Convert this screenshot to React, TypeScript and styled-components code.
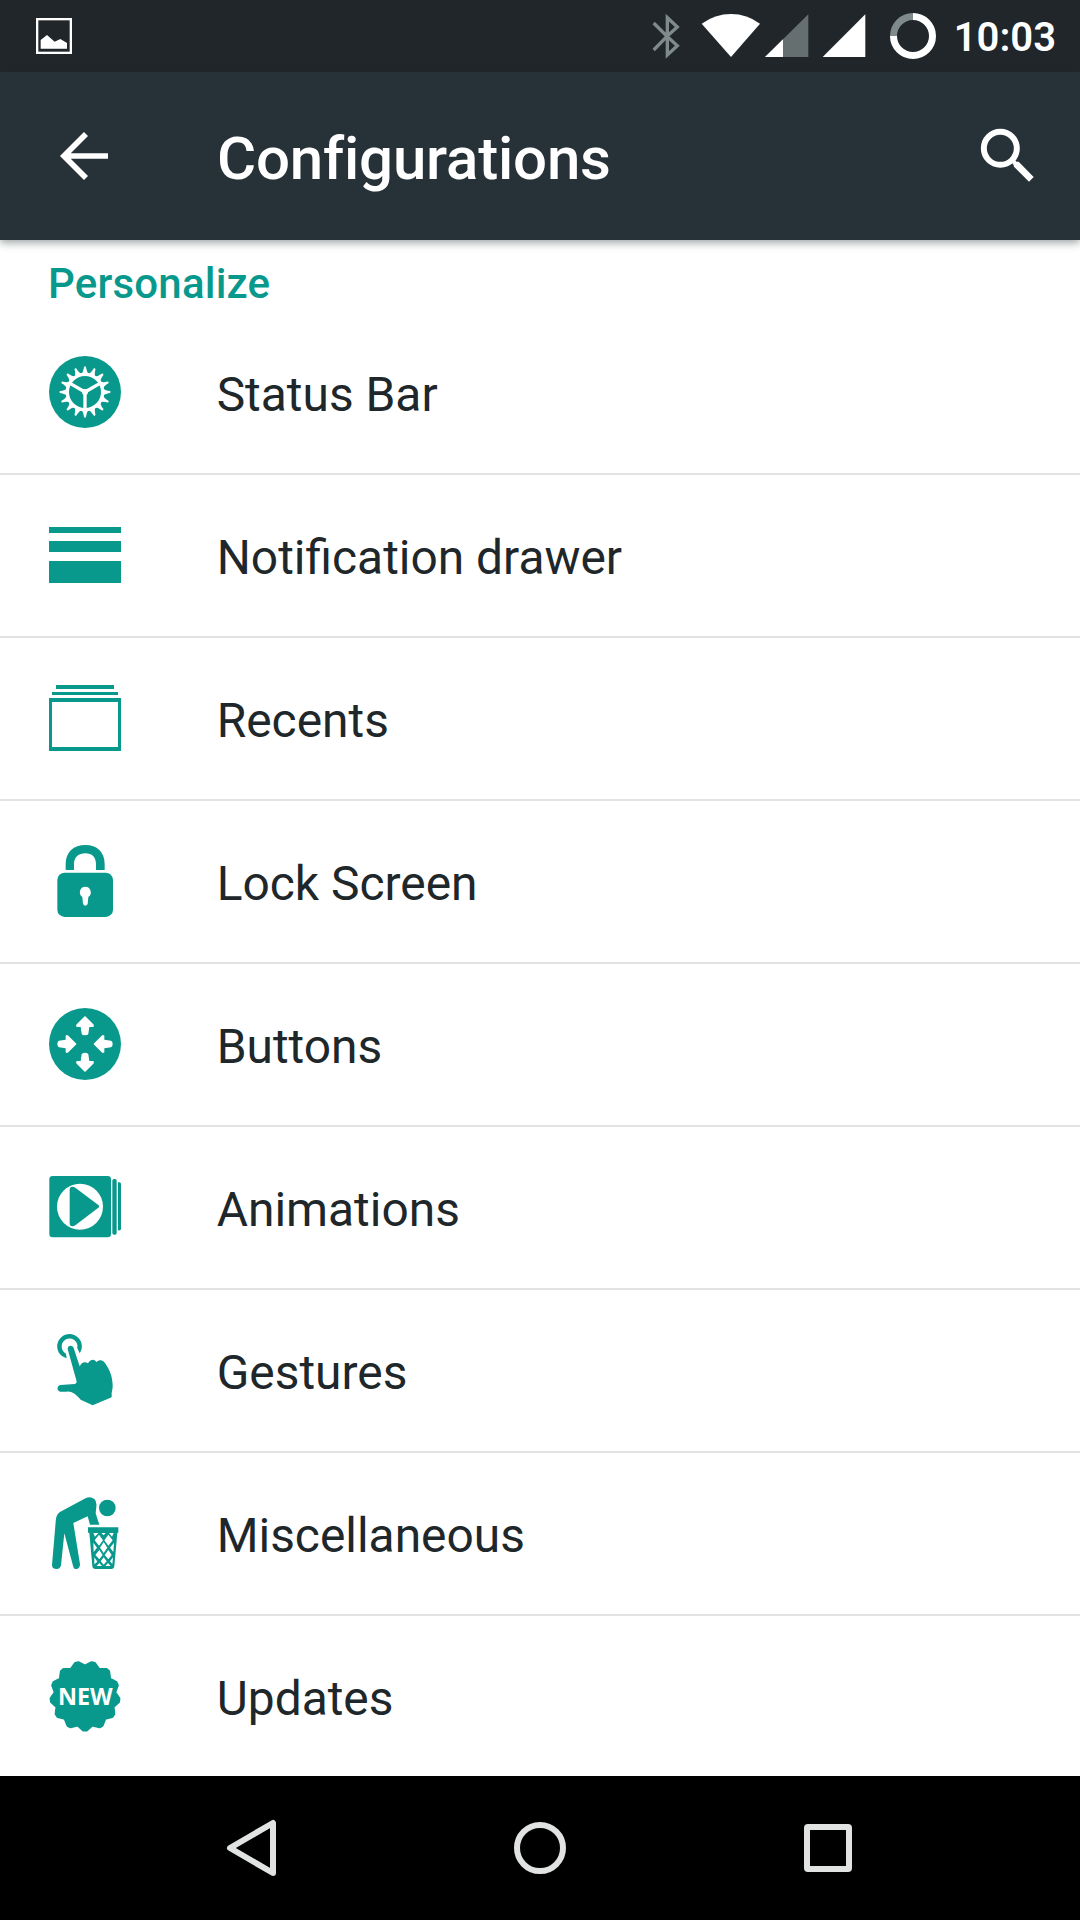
import React from 'react';
import styled, { createGlobalStyle } from 'styled-components';

const TEAL = '#09998c';

const GlobalStyle = createGlobalStyle`
  body {
    margin: 0;
    background: #fff;
    font-family: Roboto, 'Noto Sans', sans-serif;
  }
`;

const Screen = styled.div`
  display: flex;
  flex-direction: column;
  width: 1080px;
  height: 1920px;
  overflow: hidden;
  background: #fff;
`;

const StatusBar = styled.header`
  display: flex;
  flex: none;
  align-items: center;
  height: 72px;
  padding: 0 24px 0 36px;
  box-sizing: border-box;
  background: #20262a;
`;

const StatusIcon = styled.svg<{ $width: number; $gap: number }>`
  display: block;
  flex: none;
  width: ${(p) => p.$width}px;
  height: 72px;
  margin-left: ${(p) => p.$gap}px;
`;

const StatusTray = styled.div`
  display: flex;
  align-items: center;
  width: 404px;
  margin-left: auto;
`;

const Clock = styled.time`
  margin-left: auto;
  color: #fff;
  font-size: 40px;
  font-weight: 600;
  line-height: 72px;
  padding-top: 3px;
`;

const AppBar = styled.div`
  display: flex;
  flex: none;
  align-items: center;
  height: 168px;
  padding: 0 36px 0 48px;
  box-sizing: border-box;
  background: #273238;
  box-shadow: 0 3px 8px rgba(30, 45, 45, 0.42);
  z-index: 1;
`;

const IconButton = styled.button`
  display: flex;
  width: 72px;
  height: 72px;
  padding: 0;
  border: 0;
  background: none;
`;

const Title = styled.h1`
  flex: 1;
  margin: 0 0 0 97px;
  padding-top: 6px;
  color: #fff;
  font-size: 60px;
  font-weight: 500;
  letter-spacing: -0.2px;
  font-variant-ligatures: common-ligatures;
  line-height: 72px;
`;

const Content = styled.main`
  display: flex;
  flex: 1;
  flex-direction: column;
  min-height: 0;
  overflow: hidden;
`;

const SectionTitle = styled.h2`
  flex: none;
  height: 72px;
  margin: 0;
  padding: 16px 48px 0;
  box-sizing: border-box;
  color: ${TEAL};
  font-size: 42px;
  font-weight: 500;
  letter-spacing: 0.2px;
  line-height: 56px;
`;

const List = styled.ul`
  margin: 0;
  padding: 0;
  list-style: none;
`;

const Row = styled.li`
  display: flex;
  align-items: flex-start;
  height: 163px;
  padding: 44px 48px 0 49px;
  box-sizing: border-box;
  border-bottom: 2px solid #e1e2e2;
`;

const RowIcon = styled.svg`
  display: block;
  flex: none;
  width: 72px;
  height: 72px;
  overflow: visible;
  fill: ${TEAL};
`;

const RowLabel = styled.span`
  margin-left: 95.7px;
  padding-top: 3px;
  color: #20272a;
  font-size: 47.9px;
  line-height: 72px;
`;

const NavBar = styled.nav`
  display: grid;
  flex: none;
  grid-template-columns: repeat(3, 288px);
  justify-content: center;
  height: 144px;
  background: #000;
`;

const NavButton = styled.button`
  display: flex;
  align-items: center;
  justify-content: center;
  padding: 0;
  border: 0;
  background: none;
`;

const NavGlyph = styled.svg`
  width: 84px;
  height: 84px;
  fill: none;
  stroke: #e1e3e3;
  stroke-width: 6;
  stroke-linejoin: round;
`;

const angles = (count: number) => Array.from({ length: count }, (_, i) => (360 / count) * i);

const badgePoint = (step: number, radius: number) => {
  const a = Math.PI / 2 + (step * Math.PI) / 13;
  return `${(165 + radius * Math.cos(a)).toFixed(1)},${(153 + radius * Math.sin(a)).toFixed(1)}`;
};

const badgePoints = Array.from({ length: 13 }, (_, i) =>
  [badgePoint(i * 2 - 0.2, 103), badgePoint(i * 2 + 0.2, 103), badgePoint(i * 2 + 1, 91)].join(' '),
).join(' ');

const GearIcon = () => (
  <RowIcon viewBox="57 48 216 216">
    <circle cx="165" cy="156" r="108" />
    <g fill="#fff">
      {angles(16).map((a) => (
        <path key={a} transform={`rotate(${a} 165 156)`} d="M152 104Q160 97 162 81Q165 77 168 81Q170 97 178 104Z" />
      ))}
    </g>
    <g fill="none" stroke="#fff" strokeWidth="10">
      <circle cx="165" cy="156" r="53" />
      <path d="M165 208V156L120 130M165 156L210 130" />
    </g>
    <circle cx="165" cy="156" r="9" fill="#fff" />
  </RowIcon>
);

const DrawerIcon = () => (
  <RowIcon viewBox="57 27 216 216" shapeRendering="crispEdges">
    <path d="M57 51h216v18H57zM57 93h216v33H57zM57 152h216v66H57z" />
  </RowIcon>
);

const RecentsIcon = () => (
  <RowIcon viewBox="57 516 216 216" shapeRendering="crispEdges">
    <path d="M78 525h174v12H78zM66 546h198v9H66z" />
    <path fillRule="evenodd" d="M57 564h216v159H57zM66 576v135h198V576z" />
  </RowIcon>
);

const LockIcon = () => (
  <RowIcon viewBox="57 45 216 216">
    <path d="M107 120V102C107 66 131 45 166 45S224 66 224 102V120H198V102C198 82 186 70 166 70S132 82 132 102V120Z" />
    <rect x="82" y="128" width="167" height="133" rx="22" />
    <path fill="#fff" d="M166 170a17 17 0 0 1 9 31l-2 21q-7 11-14 0l-2-21a17 17 0 0 1 9-31Z" />
  </RowIcon>
);

const ARROW =
  'M165 79Q167 79 169 82L190 103Q194 108 190 111H178L175 131Q174 136 165 136T155 131L152 111H140Q136 108 140 103L161 82Q163 79 165 79Z';

const ButtonsIcon = () => (
  <RowIcon viewBox="57 54 216 216">
    <circle cx="165" cy="162" r="108" />
    <g fill="#fff">
      <path d={ARROW} />
      <path transform="rotate(180 165 162)" d={ARROW} />
      <path transform="translate(110 162) rotate(90) translate(-165 -108)" d={ARROW} />
      <path transform="translate(220 162) rotate(-90) translate(-165 -108)" d={ARROW} />
    </g>
  </RowIcon>
);

const AnimationsIcon = () => (
  <RowIcon viewBox="57 33 216 216">
    <rect x="58" y="48" width="185" height="184" rx="10" />
    <circle cx="150" cy="140" r="69" fill="#fff" />
    <path d="M119 89Q119 80 127 80Q132 80 137 84L204 134Q211 139 204 144L137 195Q132 199 127 199Q119 199 119 190Z" />
    <rect x="247" y="57" width="13" height="167" rx="5" />
    <path d="M264 67Q273 65 273 72V206Q273 213 264 211Z" />
  </RowIcon>
);

const GesturesIcon = () => (
  <RowIcon viewBox="57 42 216 216">
    <path d="M108 101A24 24 0 1 1 142 85L149 100A37 37 0 1 0 110 115Z" />
    <path d="M113 87C112 77 127 73 131 84L149 139C154 128 164 123 174 130C181 117 193 116 199 126C211 116 221 122 227 132C240 151 249 175 248 201Q247 211 245 218V232L188 256L152 239C137 222 124 213 110 215H91C80 214 80 197 91 195L134 192Q142 191 139 181Z" />
  </RowIcon>
);

const MiscellaneousIcon = () => (
  <RowIcon viewBox="57 51 216 216">
    <circle cx="232" cy="84" r="25" />
    <path d="M168 54Q181 48 193 57Q201 64 199 80L197 100L208 134H180L173 109L130 129L135 160L150 253Q150 267 138 267Q131 267 129 257L103 160L93 256Q91 267 80 267Q66 267 66 255L77 126C78 109 82 100 94 94Z" />
    <path d="M174 142H265V158H262L253 259Q252 267 244 267H196Q188 267 187 259L178 158H174Z" />
    <g fill="#fff">
      <path d="M190 159H205L195 170ZM214 159H227L221 166ZM237 159H251L246 170Z" />
      <path d="M207 164L219 181L207 197L194 181ZM235 164L248 181L235 197L223 181ZM190 188L201 203L191 216ZM221 186L232 203L221 219L210 203ZM252 188L250 216L240 203ZM208 210L218 225L208 238L196 225ZM235 210L245 225L235 238L224 225ZM193 232L202 245L193 253ZM221 232L230 244L221 254L212 244ZM249 232L247 252L240 244ZM208 249L216 258H200ZM234 249L242 258H226Z" />
    </g>
  </RowIcon>
);

const UpdatesIcon = () => (
  <RowIcon viewBox="57 45 216 216">
    <polygon points={badgePoints} stroke={TEAL} strokeWidth="7" strokeLinejoin="round" />
    <text
      x="84"
      y="179"
      fill="#fff"
      fontFamily="'Open Sans', 'Noto Sans', sans-serif"
      fontSize="72"
      fontWeight="700"
      textLength="164"
      lengthAdjust="spacingAndGlyphs"
    >
      NEW
    </text>
  </RowIcon>
);

const items = [
  { label: 'Status Bar', Icon: GearIcon },
  { label: 'Notification drawer', Icon: DrawerIcon },
  { label: 'Recents', Icon: RecentsIcon },
  { label: 'Lock Screen', Icon: LockIcon },
  { label: 'Buttons', Icon: ButtonsIcon },
  { label: 'Animations', Icon: AnimationsIcon },
  { label: 'Gestures', Icon: GesturesIcon },
  { label: 'Miscellaneous', Icon: MiscellaneousIcon },
  { label: 'Updates', Icon: UpdatesIcon },
];

export default function App() {
  return (
    <Screen>
      <GlobalStyle />
      <StatusBar>
        <StatusIcon $width={36} $gap={0} viewBox="108 0 108 216">
          <rect x="111.5" y="57.5" width="101" height="101" fill="none" stroke="#fff" strokeWidth="7" />
          <path fill="#fff" d="M122 120L141 105L164 125L181 117L201 129V146H122Z" />
        </StatusIcon>
        <StatusTray>
          <StatusIcon $width={28} $gap={0} viewBox="66 0 84 216">
            <path fill="none" stroke="#7f8a8a" strokeWidth="10" d="M71 69L111 109L71 150M111 109L142 81L112 53V165L142 137Z" />
          </StatusIcon>
          <StatusIcon $width={60} $gap={21} viewBox="213 0 180 216">
            <path fill="#fff" d="M215 71Q255 42 303 42T390 71L303 171Z" />
          </StatusIcon>
          <StatusIcon $width={45} $gap={3} viewBox="402 0 135 216">
            <path fill="#666f70" d="M405 171L535 43V171Z" />
            <path fill="#fff" d="M405 171L459 118V171Z" />
          </StatusIcon>
          <StatusIcon $width={44} $gap={13} viewBox="576 0 132 216">
            <path fill="#fff" d="M578 171L706 43V171Z" />
          </StatusIcon>
          <StatusIcon $width={48} $gap={23} viewBox="777 0 144 216">
            <g fill="none" strokeWidth="21">
              <path stroke="#7f8a8a" d="M790.5 108A58.5 58.5 0 0 1 849 49.5" />
              <path stroke="#fff" d="M849 49.5A58.5 58.5 0 1 1 790.5 108" />
            </g>
          </StatusIcon>
          <Clock>10:03</Clock>
        </StatusTray>
      </StatusBar>
      <AppBar>
        <IconButton aria-label="Back">
          <svg width="72" height="72" viewBox="144 360 216 216">
            <path fill="none" stroke="#fff" strokeWidth="17" d="M324 468H198M258 402L192 468L258 534" />
          </svg>
        </IconButton>
        <Title>Configurations</Title>
        <IconButton aria-label="Search">
          <svg width="72" height="72" viewBox="1026 360 216 216">
            <circle cx="1111" cy="445" r="49.5" fill="none" stroke="#fff" strokeWidth="18" />
            <path fill="#fff" d="M1150 493L1159 485H1166L1211 531L1197 545L1152 500Z" />
            <path stroke="#fff" strokeWidth="12" d="M1146 480L1159 493" />
          </svg>
        </IconButton>
      </AppBar>
      <Content>
        <SectionTitle>Personalize</SectionTitle>
        <List>
          {items.map(({ label, Icon }) => (
            <Row key={label}>
              <Icon />
              <RowLabel>{label}</RowLabel>
            </Row>
          ))}
        </List>
      </Content>
      <NavBar>
        <NavButton aria-label="Back">
          <NavGlyph viewBox="0 0 84 84">
            <path d="M20 42L63 17V67Z" />
          </NavGlyph>
        </NavButton>
        <NavButton aria-label="Home">
          <NavGlyph viewBox="0 0 84 84">
            <circle cx="42" cy="42" r="23" />
          </NavGlyph>
        </NavButton>
        <NavButton aria-label="Overview">
          <NavGlyph viewBox="0 0 84 84">
            <rect x="21" y="21" width="42" height="42" rx="1" />
          </NavGlyph>
        </NavButton>
      </NavBar>
    </Screen>
  );
}
